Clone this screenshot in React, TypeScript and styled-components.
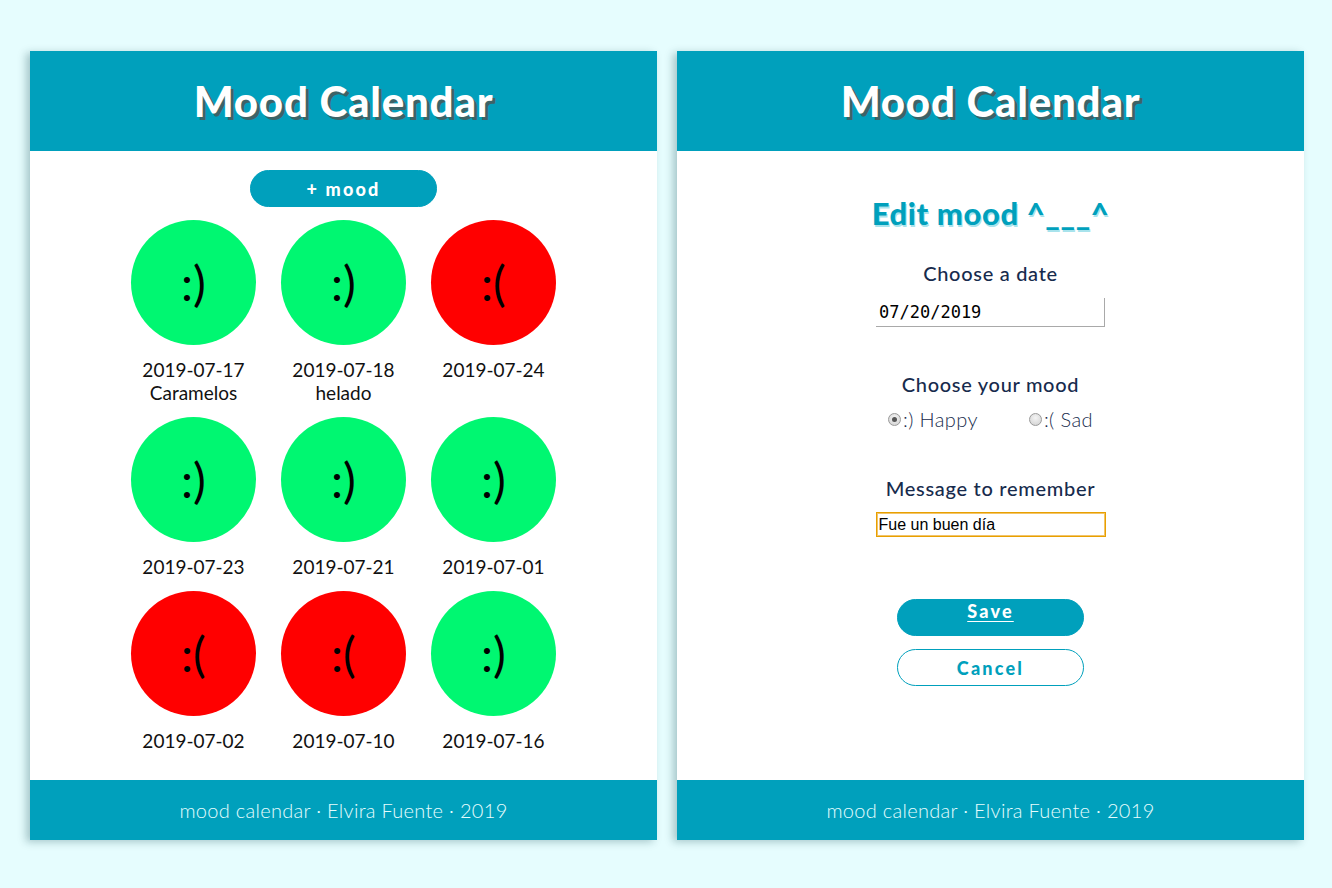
import React from "react";
import styled, { createGlobalStyle } from "styled-components";

const Global = createGlobalStyle`
  html, body { margin: 0; padding: 0; }
  body {
    background: #e6fdfe;
    font-family: "Lato", "Open Sans", sans-serif;
    width: 1332px;
    height: 888px;
    overflow: hidden;
  }
`;

const TEAL = "#00a0bc";
const NAVY = "#172b4d";

const Page = styled.div`
  display: flex;
  gap: 20px;
  padding: 51px 27px 0 30px;
`;

const Card = styled.section`
  width: 627px;
  height: 789px;
  background: #fff;
  display: flex;
  flex-direction: column;
  box-shadow: -4px 2px 8px rgba(0, 60, 70, 0.28);
`;

const Header = styled.header`
  height: 100px;
  background: ${TEAL};
  display: flex;
  align-items: center;
  justify-content: center;
`;

const Title = styled.h1`
  margin: 0;
  font-family: "Lato", sans-serif;
  font-weight: 900;
  font-size: 42px;
  letter-spacing: 0.8px;
  color: #fff;
  text-shadow: 3px 3px 0 #3d6367;
`;

const Main = styled.main`
  flex: 1;
  display: flex;
  flex-direction: column;
  align-items: center;
`;

const Footer = styled.footer`
  height: 60px;
  background: ${TEAL};
  display: flex;
  align-items: center;
  justify-content: center;
  color: #e6fdfe;
  font-weight: 300;
  font-size: 20px;
  letter-spacing: 0.3px;
`;

const PillButton = styled.button<{ $outline?: boolean; $underline?: boolean }>`
  width: 187px;
  height: 37px;
  box-sizing: border-box;
  border-radius: 19px;
  border: 1px solid ${TEAL};
  background: ${(p) => (p.$outline ? "#fff" : TEAL)};
  color: ${(p) => (p.$outline ? TEAL : "#fff")};
  font-family: "Lato", sans-serif;
  font-weight: 900;
  font-size: 18px;
  letter-spacing: 2.2px;
  text-decoration: ${(p) => (p.$underline ? "underline" : "none")};
  text-underline-offset: 3px;
  display: flex;
  align-items: center;
  justify-content: center;
  padding: 0 0 ${(p) => (p.$underline ? "14px" : "0")};
  cursor: pointer;
`;

const AddButton = styled(PillButton)`
  margin-top: 19px;
  margin-bottom: 13px;
`;

const Grid = styled.div`
  display: grid;
  grid-template-columns: repeat(3, 150px);
`;

const Day = styled.div`
  display: flex;
  flex-direction: column;
  align-items: center;
  padding-bottom: 13px;
`;

const Face = styled.div<{ $happy: boolean }>`
  width: 125px;
  height: 125px;
  border-radius: 50%;
  background: ${(p) => (p.$happy ? "#00f771" : "#ff0000")};
  display: flex;
  align-items: center;
  justify-content: center;
  font-family: "Lato", sans-serif;
  font-weight: 400;
  font-size: 48px;
  color: #000;
  margin-bottom: 13px;
`;

const DayText = styled.div`
  font-size: 19px;
  line-height: 23px;
  color: #111;
  text-align: center;
  font-weight: 400;
`;

const EditTitle = styled.h2`
  margin: 44px 0 0;
  font-family: "Lato", sans-serif;
  font-weight: 900;
  font-size: 31px;
  line-height: 36px;
  letter-spacing: 0.6px;
  color: ${TEAL};
  text-shadow: 1px 2px 0 #a8e3ec;
`;

const Label = styled.div<{ $top: number }>`
  margin-top: ${(p) => p.$top}px;
  font-size: 20px;
  line-height: 24px;
  font-weight: 500;
  letter-spacing: 0.7px;
  color: ${NAVY};
`;

const DateInput = styled.input`
  margin-top: 13px;
  width: 229px;
  height: 29px;
  box-sizing: border-box;
  border: none;
  border-right: 1px solid #a9a9a9;
  border-bottom: 1px solid #a9a9a9;
  padding: 0 4px 0 3px;
  font-family: "DejaVu Sans Mono", monospace;
  font-size: 17px;
  color: #000;
  background: #fff;
  outline: none;
`;

const RadioRow = styled.div`
  margin-top: 11px;
  display: flex;
  gap: 51px;
`;

const RadioLabel = styled.label`
  display: flex;
  align-items: center;
  font-size: 20px;
  line-height: 24px;
  font-weight: 300;
  letter-spacing: 0.4px;
  color: ${NAVY};
`;

const RadioDot = styled.span<{ $checked?: boolean }>`
  width: 13px;
  height: 13px;
  box-sizing: border-box;
  border-radius: 50%;
  border: 1px solid #9a9a9a;
  background: radial-gradient(circle at 50% 35%, #f4f4f4, #cfcfcf);
  display: inline-flex;
  align-items: center;
  justify-content: center;
  margin-right: 2px;
  &::after {
    content: "";
    width: 5px;
    height: 5px;
    border-radius: 50%;
    background: ${(p) => (p.$checked ? "#555" : "transparent")};
  }
`;

const TextInput = styled.input`
  margin-top: 12px;
  width: 230px;
  height: 25px;
  box-sizing: border-box;
  border: 1px solid #e8a000;
  box-shadow: inset 0 0 0 1px #f2c46a;
  padding: 0 2px;
  font-family: "Liberation Sans", Arial, sans-serif;
  font-size: 16px;
  color: #000;
  outline: none;
`;

const Actions = styled.div`
  margin-top: 62px;
  display: flex;
  flex-direction: column;
  gap: 13px;
`;

const days = [
  { date: "2019-07-17", note: "Caramelos", happy: true },
  { date: "2019-07-18", note: "helado", happy: true },
  { date: "2019-07-24", note: "", happy: false },
  { date: "2019-07-23", note: "", happy: true },
  { date: "2019-07-21", note: "", happy: true },
  { date: "2019-07-01", note: "", happy: true },
  { date: "2019-07-02", note: "", happy: false },
  { date: "2019-07-10", note: "", happy: false },
  { date: "2019-07-16", note: "", happy: true },
];

const FooterText = () => <Footer>mood calendar · Elvira Fuente · 2019</Footer>;

export default function App() {
  return (
    <>
      <Global />
      <Page>
        <Card>
          <Header>
            <Title>Mood Calendar</Title>
          </Header>
          <Main>
            <AddButton>+ mood</AddButton>
            <Grid>
              {days.map((d) => (
                <Day key={d.date}>
                  <Face $happy={d.happy}>{d.happy ? ":)" : ":("}</Face>
                  <DayText>{d.date}</DayText>
                  {d.note && <DayText>{d.note}</DayText>}
                </Day>
              ))}
            </Grid>
          </Main>
          <FooterText />
        </Card>
        <Card>
          <Header>
            <Title>Mood Calendar</Title>
          </Header>
          <Main>
            <EditTitle>Edit mood ^___^</EditTitle>
            <Label $top={30}>Choose a date</Label>
            <DateInput readOnly value="07/20/2019" />
            <Label $top={45}>Choose your mood</Label>
            <RadioRow>
              <RadioLabel>
                <RadioDot $checked />
                :) Happy
              </RadioLabel>
              <RadioLabel>
                <RadioDot />
                :( Sad
              </RadioLabel>
            </RadioRow>
            <Label $top={45}>Message to remember</Label>
            <TextInput readOnly value="Fue un buen día" />
            <Actions>
              <PillButton $underline>Save</PillButton>
              <PillButton $outline>Cancel</PillButton>
            </Actions>
          </Main>
          <FooterText />
        </Card>
      </Page>
    </>
  );
}
